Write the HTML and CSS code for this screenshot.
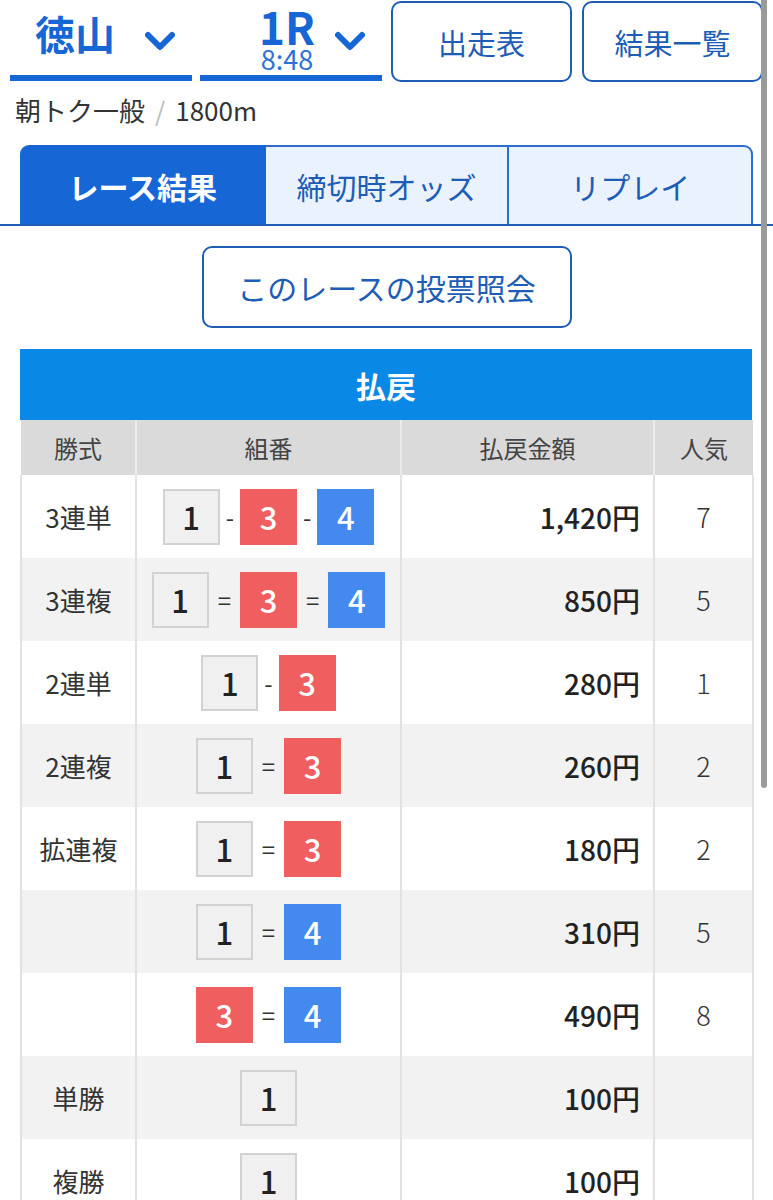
FILE: index.html
```html
<!DOCTYPE html>
<html lang="ja">
  <head>
    <meta charset="UTF-8" />
    <meta name="viewport" content="width=device-width" />
    <title>レース結果</title>
    <link rel="stylesheet" href="styles.css">
  </head>
  <body>
    <header class="race-header">
      <div class="select">
        <span class="select-label place">徳山</span>
        <svg class="chevron" viewBox="0 0 30 20"><polyline points="3,4 15,16 27,4" /></svg>
      </div>
      <div class="select">
        <span class="select-label race">
          <span class="race-no">1R</span>
          <span class="race-time">8:48</span>
        </span>
        <svg class="chevron" viewBox="0 0 30 20"><polyline points="3,4 15,16 27,4" /></svg>
      </div>
      <a class="head-btn">出走表</a>
      <a class="head-btn">結果一覧</a>
    </header>

    <p class="race-info">朝トク一般<span class="slash">/</span>1800m</p>

    <div class="tabs">
      <div class="tab active">レース結果</div>
      <div class="tab">締切時オッズ</div>
      <div class="tab">リプレイ</div>
    </div>

    <div class="inquiry">
      <a class="inquiry-btn">このレースの投票照会</a>
    </div>

    <div class="payout-title">払戻</div>
    <table class="payout">
      <colgroup>
        <col class="c-type" />
        <col class="c-combo" />
        <col class="c-money" />
        <col class="c-pop" />
      </colgroup>
      <thead>
        <tr class="cols">
          <th>勝式</th>
          <th>組番</th>
          <th>払戻金額</th>
          <th>人気</th>
        </tr>
      </thead>
      <tbody>
        <tr>
          <td class="type">3連単</td>
          <td class="combo"><span class="num n1">1</span><span class="sep">-</span><span class="num n3">3</span><span class="sep">-</span><span class="num n4">4</span></td>
          <td class="money">1,420円</td>
          <td class="pop">7</td>
        </tr>
        <tr>
          <td class="type">3連複</td>
          <td class="combo"><span class="num n1">1</span><span class="sep eq">=</span><span class="num n3">3</span><span class="sep eq">=</span><span class="num n4">4</span></td>
          <td class="money">850円</td>
          <td class="pop">5</td>
        </tr>
        <tr>
          <td class="type">2連単</td>
          <td class="combo"><span class="num n1">1</span><span class="sep">-</span><span class="num n3">3</span></td>
          <td class="money">280円</td>
          <td class="pop">1</td>
        </tr>
        <tr>
          <td class="type">2連複</td>
          <td class="combo"><span class="num n1">1</span><span class="sep eq">=</span><span class="num n3">3</span></td>
          <td class="money">260円</td>
          <td class="pop">2</td>
        </tr>
        <tr>
          <td class="type">拡連複</td>
          <td class="combo"><span class="num n1">1</span><span class="sep eq">=</span><span class="num n3">3</span></td>
          <td class="money">180円</td>
          <td class="pop">2</td>
        </tr>
        <tr>
          <td class="type"></td>
          <td class="combo"><span class="num n1">1</span><span class="sep eq">=</span><span class="num n4">4</span></td>
          <td class="money">310円</td>
          <td class="pop">5</td>
        </tr>
        <tr>
          <td class="type"></td>
          <td class="combo"><span class="num n3">3</span><span class="sep eq">=</span><span class="num n4">4</span></td>
          <td class="money">490円</td>
          <td class="pop">8</td>
        </tr>
        <tr>
          <td class="type">単勝</td>
          <td class="combo"><span class="num n1">1</span></td>
          <td class="money">100円</td>
          <td class="pop"></td>
        </tr>
        <tr>
          <td class="type">複勝</td>
          <td class="combo"><span class="num n1">1</span></td>
          <td class="money">100円</td>
          <td class="pop"></td>
        </tr>
      </tbody>
    </table>

    <div class="scroll-thumb"></div>
  </body>
</html>
```
FILE: styles.css
```css
:root {
  --blue: #1766d6;
  --blue-dark: #1d5db6;
  --line: #e2e2e2;
}
body {
  margin: 0;
  font-family: "Noto Sans CJK JP", "Noto Sans", sans-serif;
  color: #333;
  background: #fff;
}
a {
  text-decoration: none;
}

/* header */
.race-header {
  display: flex;
  gap: 9px;
  padding: 1px 0 0 10px;
  height: 80px;
}
.select {
  box-sizing: border-box;
  width: 182px;
  height: 80px;
  display: flex;
  align-items: center;
  justify-content: flex-end;
  padding: 0 17px 6px 0;
  border-bottom: 6px solid var(--blue);
}
.select + .select {
  margin-left: -1px;
}
.select-label {
  color: var(--blue);
  font-weight: 700;
}
.place {
  font-size: 40px;
  line-height: 1;
  margin-right: 30px;
  margin-top: -4px;
}
.race {
  align-self: flex-start;
  display: flex;
  flex-direction: column;
  align-items: center;
  margin-right: 20px;
  padding-top: 5px;
}
.race-no {
  font-size: 44px;
  line-height: 40px;
}
.race-time {
  font-size: 27px;
  line-height: 26px;
  font-weight: 400;
  color: #2c72d4;
}
.chevron {
  width: 30px;
  height: 20px;
  margin-top: 12px;
}
.chevron polyline {
  fill: none;
  stroke: var(--blue);
  stroke-width: 6;
  stroke-linecap: round;
  stroke-linejoin: round;
}
.head-btn {
  box-sizing: border-box;
  width: 181px;
  height: 81px;
  border: 2px solid var(--blue-dark);
  border-radius: 10px;
  display: flex;
  align-items: center;
  justify-content: center;
  color: var(--blue-dark);
  font-size: 29px;
}
.head-btn + .head-btn {
  margin-left: 1px;
}

.race-info {
  margin: 13px 0 0 15px;
  font-size: 26px;
  line-height: 32px;
  color: #333;
}
.slash {
  color: #bbb;
  margin: 0 10px;
}

/* tabs */
.tabs {
  display: flex;
  margin-top: 19px;
  padding: 0 20px 0 20px;
  border-bottom: 2px solid var(--blue-dark);
}
.tab {
  flex: 1;
  height: 79px;
  display: flex;
  align-items: center;
  justify-content: center;
  font-size: 30px;
  color: var(--blue-dark);
  background: #eaf3fd;
  border: 2px solid #2b6fcf;
  border-bottom: none;
  box-sizing: border-box;
}
.tab + .tab {
  border-left: none;
}
.tab:first-child {
  border-radius: 9px 0 0 0;
}
.tab:last-child {
  border-radius: 0 9px 0 0;
}
.tab.active {
  background: var(--blue);
  border-color: var(--blue);
  color: #fff;
  font-weight: 700;
}

.inquiry {
  display: flex;
  justify-content: center;
  padding: 20px 0 21px;
}
.inquiry-btn {
  box-sizing: border-box;
  width: 370px;
  height: 82px;
  border: 2px solid var(--blue-dark);
  border-radius: 10px;
  display: flex;
  align-items: center;
  justify-content: center;
  font-size: 30px;
  color: var(--blue-dark);
}

/* payout table */
.payout-title {
  margin-left: 20px;
  width: 732px;
  height: 71px;
  display: flex;
  align-items: center;
  justify-content: center;
  background: #0a88e6;
  color: #fff;
  font-size: 30px;
  font-weight: 700;
}
.payout {
  width: 732px;
  margin-left: 20px;
  border-collapse: collapse;
  table-layout: fixed;
}
.c-type { width: 115px; }
.c-combo { width: 265px; }
.c-money { width: 253px; }
.c-pop { width: 99px; }

.cols th {
  background: #dadada;
  font-weight: 400;
  font-size: 24px;
  color: #444;
  height: 55px;
  padding: 0;
  border-left: 2px solid #ececec;
}
.cols th:first-child {
  border-left: none;
}
.payout td {
  height: 83px;
  padding: 0;
  border-left: 2px solid var(--line);
  border-right: 2px solid var(--line);
  vertical-align: middle;
}
.payout tbody tr:nth-child(even) {
  background: #f2f2f2;
}
.type {
  text-align: center;
  font-size: 26px;
  color: #333;
}
.combo {
  text-align: center;
  white-space: nowrap;
  font-size: 0;
}
.num {
  box-sizing: border-box;
  display: inline-flex;
  align-items: center;
  justify-content: center;
  width: 57px;
  height: 56px;
  font-size: 31px;
  font-weight: 500;
  vertical-align: middle;
}
.n1 {
  background: #f0f0f0;
  border: 2px solid #d2d2d2;
  color: #222;
}
.n3 {
  background: #ef5f5f;
  color: #fff;
}
.n4 {
  background: #448aee;
  color: #fff;
}
.sep {
  display: inline-block;
  vertical-align: middle;
  font-size: 24px;
  color: #333;
  margin: 0 6px;
}
.sep.eq {
  margin: 0 9px;
}
.money {
  text-align: right;
  padding-right: 13px !important;
  font-size: 28px;
  font-weight: 500;
  color: #222;
}
.pop {
  text-align: center;
  font-size: 27px;
  font-weight: 300;
  color: #333;
}

.scroll-thumb {
  position: fixed;
  top: 0;
  right: 6px;
  width: 6px;
  height: 788px;
  background: #9b9b9b;
  border-radius: 0 0 3px 3px;
}
```
